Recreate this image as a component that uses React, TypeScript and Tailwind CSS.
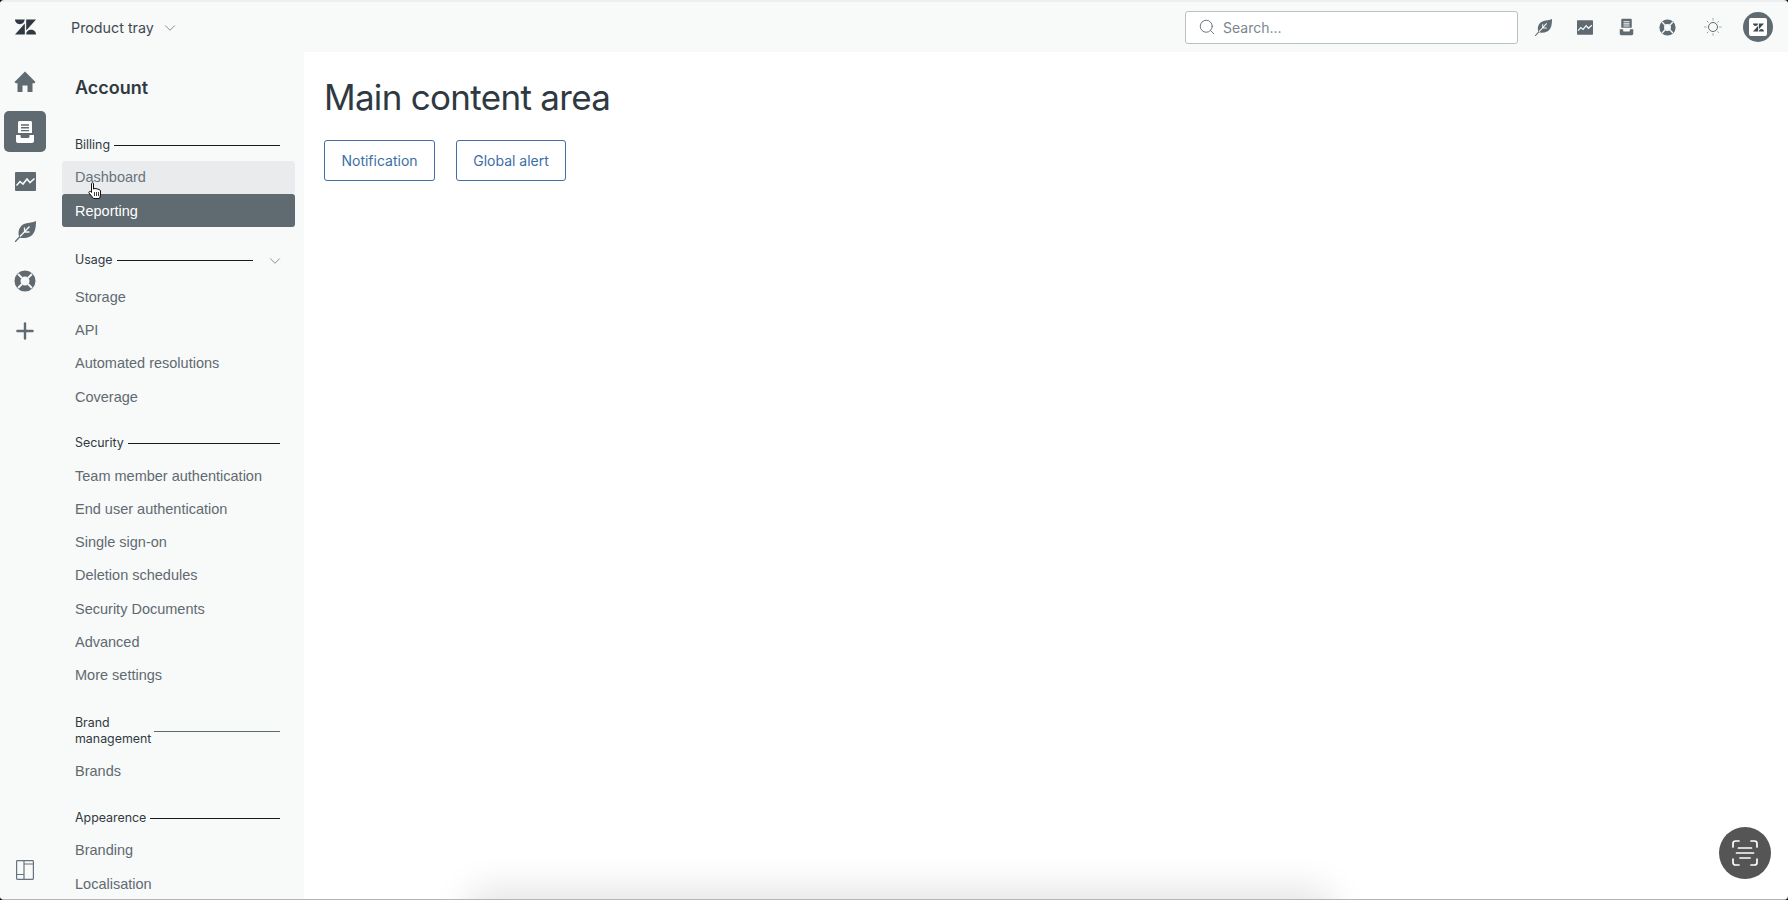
import { ChevronDown, Plus, Search } from 'lucide-react';

const font = "font-['Inter','Liberation_Sans',sans-serif]";

function ZendeskLogo({ className }: { className?: string }) {
  return (
    <svg viewBox="0 0 21 16" className={className} fill="currentColor">
      <path d="M0 0.5H9.6C9.6 3.2 7.4 5.2 4.8 5.2S0 3.2 0 0.5Z" />
      <path d="M9.800 4.600V15.500H0Z" />
      <path d="M11.200 11.400V0.500H21Z" />
      <path d="M11.200 15.500C11.200 12.800 13.400 10.800 16.100 10.800S21 12.800 21 15.500H11.200Z" />
    </svg>
  );
}

function HomeIcon({ className }: { className?: string }) {
  return (
    <svg viewBox="0 0 22 22" className={className} fill="currentColor">
      <path d="M11 .5 21.500 11 20.300 12.300H18.500V21H13.500V14.500H8.500V21H3.500V12.300H1.700L.5 11 11 .5Z" />
    </svg>
  );
}

function TrayIcon({ className, hole = '#5f6a71' }: { className?: string; hole?: string }) {
  return (
    <svg viewBox="0 0 20 22" className={className} fill="currentColor">
      <path d="M3 1.500C3 .7 3.700 0 4.500 0H15.500C16.300 0 17 .7 17 1.500V12H3V1.500Z" />
      <path d="M1 14H5.500V15.500C5.500 16.300 6.200 17 7 17H13C13.800 17 14.500 16.300 14.500 15.500V14H19V20C19 21 18.200 22 17 22H3C1.800 22 1 21 1 20V14Z" />
      <path d="M6 4H14M6 6.800H14M6 9.600H14" stroke={hole} strokeWidth="1.400" fill="none" />
    </svg>
  );
}

function ChartIcon({ className, hole = '#f8f9f9' }: { className?: string; hole?: string }) {
  return (
    <svg viewBox="0 0 21 19" className={className}>
      <rect width="21" height="19" rx="1" fill="currentColor" />
      <path d="M1.500 13.500 5 9.500 8 12 12 7 15 10.500 19.500 6.500" fill="none" stroke={hole} strokeWidth="1.600" />
    </svg>
  );
}

function LeafIcon({ className, hole = '#f8f9f9' }: { className?: string; hole?: string }) {
  return (
    <svg viewBox="0 0 21 21" className={className}>
      <path d="M4.500 16.500C2 11 4.500 4 10.500 2.500C14 1.600 18 1.500 21 0C21 7 20 13 15 15.500C11.500 17.300 7.500 17.500 4.500 16.500Z" fill="currentColor" />
      <path d="M0 21 5 15.500" stroke="currentColor" strokeWidth="1.300" fill="none" />
      <path d="M5 15.500 14.500 5.500M9.500 10.500V6.500M9.500 11H14.500" stroke={hole} strokeWidth="1.300" fill="none" />
    </svg>
  );
}

function RingIcon({ className }: { className?: string }) {
  return (
    <svg viewBox="0 0 22 22" className={className} fill="none">
      <circle cx="11" cy="11" r="7.500" stroke="currentColor" strokeWidth="6" />
      <path d="M4 4 8 8M18 4 14 8M4 18 8 14M18 18 14 14" stroke="#f8f9f9" strokeWidth="1.800" />
    </svg>
  );
}

function LayoutIcon({ className }: { className?: string }) {
  return (
    <svg viewBox="0 0 18 20" className={className} fill="none" stroke="currentColor" strokeWidth="1.200">
      <rect x=".6" y=".6" width="16.800" height="18.800" rx=".8" />
      <path d="M8 .6V19.400M.6 14.500H8M8 4H17.400" />
    </svg>
  );
}

function SunIcon({ className }: { className?: string }) {
  return (
    <svg viewBox="0 0 18 18" className={className} fill="none" stroke="currentColor" strokeWidth="1">
      <circle cx="9" cy="9" r="4.500" />
      <path d="M9 .5V2.500M9 15.500V17.500M.5 9H2.500M15.500 9H17.500M3 3 4.400 4.400M13.600 13.600 15 15M3 15 4.400 13.600M13.600 4.400 15 3" strokeDasharray="1 .6" />
    </svg>
  );
}

function HandCursor() {
  return (
    <svg viewBox="0 0 16 18" className="absolute left-[87px] top-[180px] h-[18px] w-[16px]">
      <path
        d="M4.500 1.500C4.500.5 6.500.5 6.500 1.500V7L8 6.500 10 6.800 12 7.500 13.500 8.500V13L12.500 16.500H6.500L2 11C1.500 10 2.500 9 3.500 9.500L4.500 10.500V1.500Z"
        fill="#fff"
        stroke="#111"
        strokeWidth="1"
      />
      <path d="M7.500 10V14M9.500 10V14M11.500 10V14" stroke="#111" strokeWidth=".8" />
    </svg>
  );
}

function SectionLabel({ label, chevron, narrow }: { label: string; chevron?: boolean; narrow?: boolean }) {
  return (
    <div className={`ml-[13px] mr-[15px] flex items-center gap-[4px] pt-px text-[12.400px] leading-[16.500px] text-[#2f3941] ${chevron ? 'h-[30px]' : ''}`}>
      <span className={narrow ? 'w-[75px] shrink-0' : 'shrink-0'}>{label}</span>
      <span className={`h-px grow ${narrow ? 'bg-[#5f6a71]' : 'bg-[#1a1a1a]'}`} />
      {chevron && <ChevronDown className="-mr-[4px] ml-[9px] h-[18px] w-[18px] text-[#5f6a71]" strokeWidth={1} />}
    </div>
  );
}

function NavItem({ label, state }: { label: string; state?: 'hover' | 'active' }) {
  const look =
    state === 'active'
      ? 'bg-[#5f6a71] text-white font-medium'
      : state === 'hover'
        ? 'bg-[#e9ebed] text-[#68737d]'
        : 'text-[#5f6a71]';
  return (
    <div className={`flex h-[33.300px] items-center rounded-[3px] pl-[13px] pt-[2px] font-['Liberation_Sans',sans-serif] text-[14.500px] ${look}`}>{label}</div>
  );
}

const railIcons = [
  <HomeIcon key="home" className="h-[22px] w-[22px]" />,
  <ChartIcon key="chart" className="h-[19px] w-[21px]" />,
  <LeafIcon key="leaf" className="h-[21px] w-[21px]" />,
  <RingIcon key="ring" className="h-[22px] w-[22px]" />,
  <Plus key="plus" className="h-[26px] w-[26px]" strokeWidth={2.200} />,
];

export default function App() {
  return (
    <div className={`h-[900px] w-full overflow-hidden bg-black ${font}`}>
      <div className="relative flex h-[900px] flex-col overflow-hidden rounded-[4px] border-b border-t-2 border-b-[#b5b5b5] border-t-[#eceef0] bg-white">
        <header className="flex h-[50px] shrink-0 items-center bg-[#f8f9f9]">
          <div className="flex w-[50px] shrink-0 justify-center text-[#2f3941]">
            <ZendeskLogo className="h-[16px] w-[21px]" />
          </div>
          <div className="ml-[21px] flex items-center gap-[7px] pt-px text-[14.300px] text-[#3e4a52]">
            Product tray
            <ChevronDown className="h-[18px] w-[18px] text-[#5f6a71]" strokeWidth={1} />
          </div>
          <div className="ml-auto flex h-[33px] w-[333px] items-center gap-[7px] rounded-[3px] border border-[#b9bfc4] bg-white pl-[12px] text-[14px] text-[#7c868d]">
            <Search className="h-[18px] w-[18px] text-[#5f6a71]" strokeWidth={1.200} />
            Search...
          </div>
          <div className="ml-[4px] mr-[15px] flex items-center text-[#5f6a71]">
            <div className="flex w-[42px] justify-center">
              <LeafIcon className="h-[17px] w-[17px]" />
            </div>
            <div className="flex w-[41px] justify-center">
              <ChartIcon className="h-[15px] w-[16px]" />
            </div>
            <div className="flex w-[42px] justify-center">
              <TrayIcon className="h-[18px] w-[15px]" hole="#f8f9f9" />
            </div>
            <div className="flex w-[41px] justify-center">
              <RingIcon className="h-[17px] w-[17px]" />
            </div>
            <div className="flex w-[49px] justify-center">
              <SunIcon className="h-[18px] w-[18px]" />
            </div>
            <div className="ml-[6px] flex h-[30px] w-[30px] items-center justify-center rounded-full bg-[#5f6a71]">
              <div className="flex h-[18px] w-[18px] items-center justify-center rounded-[2px] bg-white text-[#3e4a52]">
                <ZendeskLogo className="h-[9px] w-[11px]" />
              </div>
            </div>
          </div>
        </header>

        <div className="flex min-h-0 grow">
          <aside className="relative flex w-[304px] shrink-0 bg-[#f8f9f9]">
            <nav className="flex w-[50px] shrink-0 flex-col items-center pt-[5px] text-[#5f6a71]">
              <div className="flex h-[54px] w-full items-center justify-center pb-[4px]">{railIcons[0]}</div>
              <div className="flex h-[41px] w-[42px] items-center justify-center rounded-[5px] bg-[#5f6a71] text-white">
                <TrayIcon className="h-[22px] w-[20px]" />
              </div>
              {railIcons.slice(1).map((icon, i) => (
                <div key={i} className={`flex h-[50px] w-full items-center justify-center ${i === 0 ? 'mt-[4px]' : ''}`}>
                  {icon}
                </div>
              ))}
              <div className="mt-auto flex h-[42px] w-full justify-center pt-[3px]">
                <LayoutIcon className="h-[20px] w-[18px] text-[#68737d]" />
              </div>
            </nav>

            <div className="ml-[12px] w-[233px] overflow-hidden">
              <h2 className="mb-[36px] ml-[13px] mt-[24px] text-[18px] font-semibold leading-[24px] text-[#2f3941]">Account</h2>
              <SectionLabel label="Billing" />
              <div className="mt-[7px]">
                <NavItem label="Dashboard" state="hover" />
                <NavItem label="Reporting" state="active" />
              </div>
              <div className="mt-[18px]">
                <SectionLabel label="Usage" chevron />
              </div>
              <div className="mt-[5px]">
                {['Storage', 'API', 'Automated resolutions', 'Coverage'].map((l) => (
                  <NavItem key={l} label={l} />
                ))}
              </div>
              <div className="mt-[21px]">
                <SectionLabel label="Security" />
              </div>
              <div className="mt-[7px]">
                {[
                  'Team member authentication',
                  'End user authentication',
                  'Single sign-on',
                  'Deletion schedules',
                  'Security Documents',
                  'Advanced',
                  'More settings',
                ].map((l) => (
                  <NavItem key={l} label={l} />
                ))}
              </div>
              <div className="mt-[22px]">
                <SectionLabel label="Brand management" narrow />
              </div>
              <div className="mt-[6px]">
                <NavItem label="Brands" />
              </div>
              <div className="mt-[22px]">
                <SectionLabel label="Appearence" />
              </div>
              <div className="mt-[7px]">
                <NavItem label="Branding" />
                <NavItem label="Localisation" />
              </div>
            </div>
          </aside>

          <main className="pl-[20px] pt-[22px]">
            <h1 className="text-[35px] font-normal leading-[46px] tracking-[-0.7px] text-[#2f3941]">Main content area</h1>
            <div className="mt-[20px] flex gap-[21px]">
              <button className="h-[41px] w-[111px] rounded-[3px] border border-[#3f6fa3] text-[14px] text-[#3a6ea5]">Notification</button>
              <button className="h-[41px] w-[110px] rounded-[3px] border border-[#3f6fa3] text-[14px] text-[#3a6ea5]">Global alert</button>
            </div>
          </main>
        </div>

        <HandCursor />

        <div className="absolute bottom-[-36px] left-[475px] h-[36px] w-[850px] rounded-[30px] shadow-[0_0_36px_12px_rgba(0,0,0,0.1)]" />

        <button className="absolute bottom-[20px] right-[17px] flex h-[52px] w-[52px] items-center justify-center rounded-full bg-[#555555] text-white">
          <svg viewBox="0 0 26 26" className="h-[26px] w-[26px]" fill="none" stroke="currentColor" strokeWidth="1.700" strokeLinecap="round">
            <path d="M1 7V3.500C1 2 2 1 3.500 1H7M19 1H22.500C24 1 25 2 25 3.500V7M25 19V22.500C25 24 24 25 22.500 25H19M7 25H3.500C2 25 1 24 1 22.500V19" />
            <path d="M6.500 8H19.500M4.500 13H21.500M8 18H18" />
          </svg>
        </button>
      </div>
    </div>
  );
}
